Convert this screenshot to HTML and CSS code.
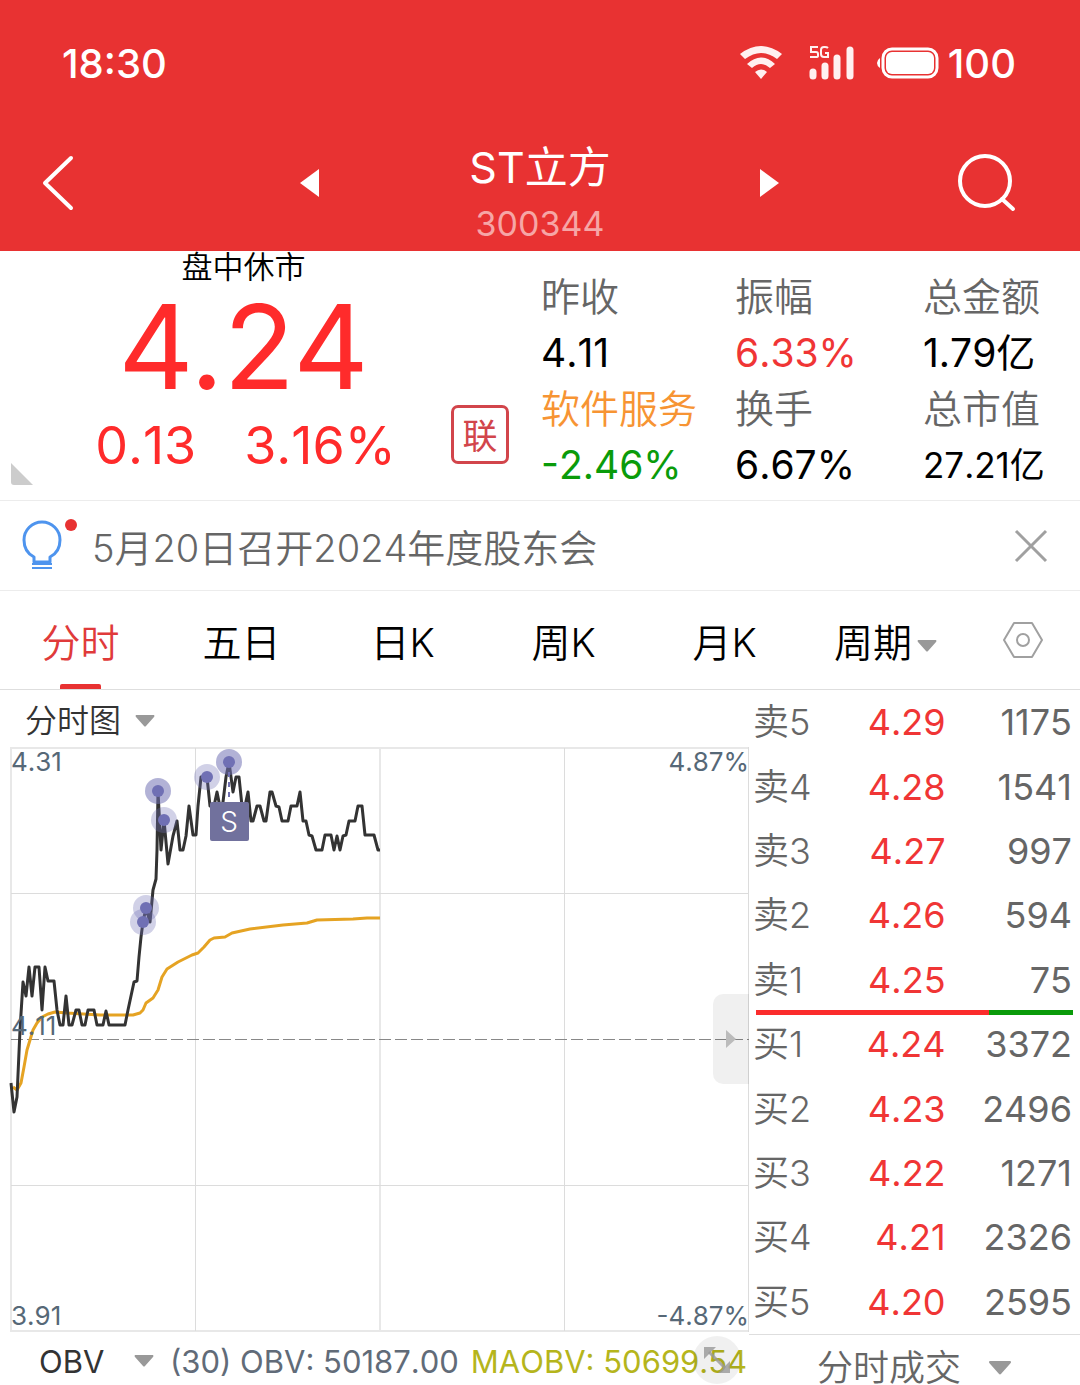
FILE: index.html
```html
<!DOCTYPE html>
<html lang="zh-CN">
<head>
    <meta charset="UTF-8">
    <meta name="viewport" content="width=device-width, initial-scale=1.0">
    <title>ST立方 300344</title>
    <link rel="stylesheet" href="styles.css">
</head>
<body>
    <header class="header">
        <div class="status-bar">
            <span class="clock">18:30</span>
            <div class="status-icons">
                <svg class="wifi" width="46" height="36" viewBox="0 0 46 36">
                    <path d="M2 9Q23 -7 44 9L39 14Q23 2 7 14Z" fill="#fff0f0"/>
                    <path d="M9 19Q23 6 37 19L32 23Q23 15 14 23Z" fill="#fff0f0"/>
                    <path d="M17 27Q23 22 29 27L23 34Z" fill="#fff0f0"/>
                </svg>
                <svg class="signal" width="48" height="36" viewBox="0 0 48 36">
                    <path d="M10 2H3V7H8Q10 7 10 9V11Q10 12 8 12H2M20 3Q19 2 17 2H16Q13 2 13 5V9Q13 12 16 12H20V8H17" fill="none" stroke="#fff0f0" stroke-width="2"/>
                    <path d="M5 27V31M17 21V31M29 13V31M42 5V31" stroke="#fff0f0" stroke-width="7" stroke-linecap="round"/>
                </svg>
                <svg class="battery" width="64" height="34" viewBox="0 0 64 34">
                    <path d="M4 12V22Q1 20 1 17T4 12Z" fill="#fff"/>
                    <rect x="7" y="3" width="54" height="28" rx="9" fill="none" stroke="#fff" stroke-width="3"/>
                    <rect x="10" y="6" width="48" height="22" rx="6" fill="#fff"/>
                </svg>
                <span class="battery-level">100</span>
            </div>
        </div>
        <nav class="nav">
            <button class="icon-button back" aria-label="返回">
                <svg width="34" height="58" viewBox="0 0 34 58"><path d="M31 4L5 29L31 54" fill="none" stroke="#fff" stroke-width="4" stroke-linecap="round" stroke-linejoin="round"/></svg>
            </button>
            <div class="stock-switch">
                <button class="icon-button" aria-label="上一只">
                    <svg width="20" height="28" viewBox="0 0 20 28"><path d="M19 0V28L0 14Z" fill="#fff"/></svg>
                </button>
                <div class="stock-title">
                    <h1 class="stock-name">ST立方</h1>
                    <span class="stock-code">300344</span>
                </div>
                <button class="icon-button" aria-label="下一只">
                    <svg width="20" height="28" viewBox="0 0 20 28"><path d="M0 0V28L19 14Z" fill="#fff"/></svg>
                </button>
            </div>
            <button class="icon-button search" aria-label="搜索">
                <svg width="58" height="58" viewBox="0 0 58 58"><circle cx="27" cy="27" r="25" fill="none" stroke="#fff" stroke-width="4"/><path d="M44 45L55 55" stroke="#fff" stroke-width="4" stroke-linecap="round"/></svg>
            </button>
        </nav>
    </header>

    <section class="quote">
        <div class="quote-main">
            <span class="market-state">盘中休市</span>
            <strong class="price">4.24</strong>
            <div class="change"><span>0.13</span><span>3.16%</span></div>
            <svg class="corner" width="22" height="22" viewBox="0 0 22 22"><path d="M0 0L22 22H3Q0 22 0 19Z" fill="#ccc"/></svg>
        </div>
        <span class="link-badge">联</span>
        <dl class="stats">
            <div class="stat"><dt>昨收</dt><dd>4.11</dd></div>
            <div class="stat"><dt>振幅</dt><dd class="up">6.33%</dd></div>
            <div class="stat"><dt>总金额</dt><dd>1.79亿</dd></div>
            <div class="stat"><dt class="sector">软件服务</dt><dd class="down">-2.46%</dd></div>
            <div class="stat"><dt>换手</dt><dd>6.67%</dd></div>
            <div class="stat"><dt>总市值</dt><dd class="compact">27.21亿</dd></div>
        </dl>
    </section>

    <section class="notice">
        <svg class="bulb" width="58" height="54" viewBox="0 0 58 54">
            <path d="M13 43V38Q3 33 3 21A18 18 0 0 1 39 21Q39 33 29 38V43Z" fill="none" stroke="#4e94ee" stroke-width="3" stroke-linejoin="round"/>
            <path d="M11 45H31M11 49H31" stroke="#4e94ee" stroke-width="2"/>
            <circle cx="50" cy="6" r="6" fill="#e83232"/>
        </svg>
        <a class="notice-text" href="#">5月20日召开2024年度股东会</a>
        <button class="icon-button" aria-label="关闭">
            <svg width="34" height="34" viewBox="0 0 34 34"><path d="M2 2L32 32M32 2L2 32" stroke="#a0a0a0" stroke-width="3"/></svg>
        </button>
    </section>

    <nav class="tabs">
        <button class="tab active">分时</button>
        <button class="tab">五日</button>
        <button class="tab">日K</button>
        <button class="tab">周K</button>
        <button class="tab">月K</button>
        <label class="tab picker">
            <select aria-label="周期"><option>周期</option></select>
            <svg class="caret" width="20" height="12" viewBox="0 0 20 12"><path d="M1 0H19Q20 1 19 2L11 11Q10 12 9 11L1 2Q0 1 1 0Z" fill="#999"/></svg>
        </label>
        <button class="tab" aria-label="设置">
            <svg width="42" height="38" viewBox="0 0 42 38"><path d="M12 2H30L40 19L30 36H12L2 19Z" fill="none" stroke="#a0a0a0" stroke-width="2" stroke-linejoin="round"/><circle cx="21" cy="19" r="6" fill="none" stroke="#a0a0a0" stroke-width="2"/></svg>
        </button>
    </nav>

    <main class="board">
        <section class="chart-panel">
            <label class="chart-type picker">
                <select aria-label="图表类型"><option>分时图</option></select>
                <svg class="caret" width="20" height="12" viewBox="0 0 20 12"><path d="M1 0H19Q20 1 19 2L11 11Q10 12 9 11L1 2Q0 1 1 0Z" fill="#999"/></svg>
            </label>
            <div class="chart-wrap">
                <svg class="chart" viewBox="0 0 749 585">
                    <path d="M11 1H749M11 584H749M11 0V585M380 1V584" stroke="#e8e8e8" stroke-width="2" fill="none"/>
                    <path d="M11 146.500H749M11 438.500H749M195.500 1V584M564.500 1V584M748.500 0V585" stroke="#dcdcdc" stroke-width="1" fill="none"/>
                    <path d="M11 292.500H749" stroke="#888" stroke-dasharray="12 4"/>
                    <!-- average price -->
                    <polyline class="average" points="13,340 17,343 21,336 24,320 27,303 30,293 33,283 37,276 42,270 48,267 55,265 67,266 100,268 133,268 140,266 143,263 146,256 153,251 158,243 162,230 167,222 178,215 192,208 198,206 204,200 210,193 214,191 225,190 232,186 250,182 283,178 307,176 317,173 353,172 367,171 380,171"/>
                    <!-- last price -->
                    <polyline class="last" points="11,336 14,365 17,350 20,283 23,235 26,249 29,220 32,249 35,220 39,220 42,263 45,220 48,234 54,234 57,263 60,278 63,278 66,249 69,278 72,278 76,263 79,263 82,278 85,278 88,263 94,263 97,278 103,278 106,264 109,278 125,278 128,263 134,235 137,234 139,210 141,190 143,175 146,161 150,175 153,143 156,132 157,103 158,44 161,103 164,73 168,117 173,89 177,74 180,103 183,103 186,89 189,59 193,88 196,88 198,59 201,30 207,30 210,59 214,59 217,45 220,60 223,55 226,30 229,15 233,45 236,30 239,30 242,59 245,59 248,45 251,74 253,74 257,59 260,59 264,74 266,74 270,45 272,45 276,59 279,60 282,74 288,74 291,59 297,59 300,45 303,74 306,74 309,88 312,89 316,103 322,103 325,88 331,88 334,103 337,89 340,103 343,89 346,88 349,74 355,74 358,59 362,59 365,88 374,88 378,103 380,103"/>
                    <text class="axis" x="11" y="24">4.31</text>
                    <text class="axis end" x="749" y="24">4.87%</text>
                    <text class="axis" x="11" y="288">4.11</text>
                    <text class="axis" x="11" y="578">3.91</text>
                    <text class="axis end" x="749" y="578">-4.87%</text>
                    <path d="M229 15V60" stroke="#7070b0" stroke-width="2" stroke-dasharray="5 5"/>
                    <g class="halo">
                        <circle class="strong" cx="158" cy="44" r="13"/>
                        <circle cx="164" cy="73" r="13"/>
                        <circle cx="207" cy="30" r="13"/>
                        <circle class="strong" cx="229" cy="15" r="13"/>
                        <circle cx="146" cy="161" r="13"/>
                        <circle cx="143" cy="175" r="13"/>
                    </g>
                    <g class="dot">
                        <circle cx="158" cy="44" r="6"/>
                        <circle cx="164" cy="73" r="6"/>
                        <circle cx="207" cy="30" r="6"/>
                        <circle cx="229" cy="15" r="6"/>
                        <circle cx="146" cy="161" r="6"/>
                        <circle cx="143" cy="175" r="6"/>
                    </g>
                    <rect x="210" y="55" width="39" height="39" rx="2" fill="#71719d"/>
                    <text class="sell-mark" x="229" y="85">S</text>
                </svg>
                <button class="drawer" aria-label="收起盘口">
                    <svg width="10" height="18" viewBox="0 0 10 18"><path d="M0 0L10 9L0 18Z" fill="#bbb"/></svg>
                </button>
            </div>
            <div class="indicator">
                <label class="picker">
                    <select aria-label="指标"><option>OBV</option></select>
                    <svg class="caret" width="20" height="12" viewBox="0 0 20 12"><path d="M1 0H19Q20 1 19 2L11 11Q10 12 9 11L1 2Q0 1 1 0Z" fill="#999"/></svg>
                </label>
                <span class="obv">(30) OBV: 50187.00</span>
                <span class="maobv">MAOBV: 50699.54</span>
                <button class="expand" aria-label="全屏">
                    <svg width="26" height="26" viewBox="0 0 26 26"><path d="M0 0H12L0 12ZM26 26H14L26 14Z" fill="#999" fill-opacity="0.8"/><path d="M5 5L21 21" stroke="#999" stroke-opacity="0.8" stroke-width="3"/></svg>
                </button>
            </div>
        </section>

        <section class="book">
            <table class="orders">
                <tr><th scope="row">卖5</th><td class="order-price">4.29</td><td>1175</td></tr>
                <tr><th scope="row">卖4</th><td class="order-price">4.28</td><td>1541</td></tr>
                <tr><th scope="row">卖3</th><td class="order-price">4.27</td><td>997</td></tr>
                <tr><th scope="row">卖2</th><td class="order-price">4.26</td><td>594</td></tr>
                <tr><th scope="row">卖1</th><td class="order-price">4.25</td><td>75</td></tr>
            </table>
            <div class="ratio"><span class="ratio-buy" style="width: 73.5%"></span></div>
            <table class="orders">
                <tr><th scope="row">买1</th><td class="order-price">4.24</td><td>3372</td></tr>
                <tr><th scope="row">买2</th><td class="order-price">4.23</td><td>2496</td></tr>
                <tr><th scope="row">买3</th><td class="order-price">4.22</td><td>1271</td></tr>
                <tr><th scope="row">买4</th><td class="order-price">4.21</td><td>2326</td></tr>
                <tr><th scope="row">买5</th><td class="order-price">4.20</td><td>2595</td></tr>
            </table>
            <label class="trades picker">
                <select aria-label="成交明细"><option>分时成交</option></select>
                <svg class="caret" width="24" height="14" viewBox="0 0 20 12"><path d="M1 0H19Q20 1 19 2L11 11Q10 12 9 11L1 2Q0 1 1 0Z" fill="#999"/></svg>
            </label>
        </section>
    </main>
</body>
</html>
```

FILE: styles.css
```css
* {
    box-sizing: border-box;
}
body {
    margin: 0;
    background: #fff;
    color: #000;
    font-family: Inter, "Noto Sans CJK SC", sans-serif;
    font-weight: 350;
    font-kerning: none;
}
button, select {
    font: inherit;
    font-kerning: inherit;
    color: inherit;
    background: none;
    border: none;
    padding: 0;
    margin: 0;
    cursor: pointer;
}
select {
    appearance: none;
}
svg {
    display: block;
    flex: none;
}
.icon-button {
    display: flex;
    align-items: center;
}

/* header */
.header {
    background: #e83232;
    color: #fff;
}
.status-bar {
    display: flex;
    justify-content: space-between;
    align-items: center;
    height: 126px;
    padding: 0 64px 0 62px;
    font-size: 40px;
    font-weight: 500;
}
.status-icons {
    display: flex;
    align-items: center;
}
.signal {
    margin-left: 24px;
}
.battery {
    margin-left: 20px;
}
.battery-level {
    margin-left: 8px;
}
.nav {
    display: grid;
    grid-template-columns: 300fr 480fr 300fr;
    height: 125px;
}
.nav .icon-button {
    height: 114px;
}
.back {
    margin-left: 40px;
    justify-self: start;
}
.search {
    margin-right: 64px;
    justify-self: end;
}
.stock-switch {
    display: flex;
    justify-content: space-between;
    align-items: flex-start;
}
.stock-title {
    padding-top: 9px;
    text-align: center;
}
.stock-name {
    margin: 0;
    font-size: 43px;
    line-height: 64px;
    font-weight: 400;
}
.stock-code {
    display: block;
    font-size: 34px;
    line-height: 50px;
    font-weight: 400;
    color: #f6a6a6;
}

/* quote */
.quote {
    display: grid;
    grid-template-columns: 451fr 90fr 539fr;
    height: 250px;
    border-bottom: 1px solid #ececec;
}
.quote-main {
    position: relative;
    display: flex;
    flex-direction: column;
    align-items: center;
    padding-left: 36px;
    color: #ff2b2b;
    font-weight: 400;
}
.market-state {
    font-size: 31px;
    line-height: 32px;
    font-weight: 350;
    color: #000;
}
.price {
    font-size: 117px;
    line-height: 128px;
    font-weight: 400;
    font-kerning: normal;
}
.change {
    display: flex;
    gap: 48px;
    padding-left: 4px;
    font-size: 52px;
    line-height: 70px;
}
.corner {
    position: absolute;
    left: 11px;
    bottom: 15px;
}
.link-badge {
    align-self: end;
    width: 58px;
    height: 59px;
    margin-bottom: 36px;
    border: 3px solid #d2454b;
    border-radius: 7px;
    color: #d2454b;
    font-size: 35px;
    font-weight: 400;
    line-height: 56px;
    text-align: center;
}
.stats {
    display: grid;
    grid-template-columns: 194fr 188fr 157fr;
    align-content: start;
    margin: 0;
    padding-top: 18px;
    font-size: 39px;
    line-height: 56px;
    white-space: nowrap;
}
.stat dt {
    color: #666;
}
.stat dd {
    margin: 0;
    font-weight: 400;
}
.stat .sector {
    color: #f79433;
}
.stat .up {
    color: #f03535;
}
.stat .down {
    color: #0a9b0a;
}
.stat .compact {
    font-size: 35px;
}

/* notice */
.notice {
    display: flex;
    align-items: center;
    height: 90px;
    padding: 0 32px 0 21px;
    border-bottom: 1px solid #ececec;
}
.notice-text {
    flex: 1;
    margin-left: 13px;
    color: #666;
    font-size: 38px;
    text-decoration: none;
}

/* tabs */
.tabs {
    display: grid;
    grid-template-columns: repeat(6, 161fr) 114fr;
    height: 99px;
    border-bottom: 1px solid #dedede;
    font-size: 39px;
}
.tab {
    position: relative;
    display: flex;
    align-items: center;
    justify-content: center;
}
.active {
    color: #e03a3a;
}
.active::after {
    content: "";
    position: absolute;
    left: 60px;
    right: 60px;
    bottom: 0;
    height: 5px;
    border-radius: 2px 2px 0 0;
    background: #e83232;
}
.picker {
    display: flex;
    align-items: center;
}
.tab.picker {
    padding-top: 4px;
}
.tab .caret {
    margin: 8px 0 0 4px;
}

/* chart */
.board {
    display: grid;
    grid-template-columns: 749fr 331fr;
}
.chart-type {
    height: 57px;
    padding: 4px 0 0 25px;
    gap: 13px;
    color: #333;
    font-size: 32px;
}
.chart-wrap {
    position: relative;
}
.chart {
    width: 100%;
}
.axis {
    font-size: 26px;
    font-weight: 400;
    fill: #566877;
}
.end {
    text-anchor: end;
}
.average, .last {
    fill: none;
    stroke: #e5a323;
    stroke-width: 3;
    stroke-linejoin: round;
}
.last {
    stroke: #333;
}
.halo {
    fill: #7070b4;
    fill-opacity: 0.32;
}
.strong {
    fill-opacity: 0.54;
}
.dot {
    fill: #7070b4;
}
.sell-mark {
    fill: #fff;
    font-size: 28px;
    text-anchor: middle;
}
.drawer {
    position: absolute;
    right: 0;
    top: 247px;
    display: flex;
    align-items: center;
    justify-content: center;
    width: 36px;
    height: 90px;
    border-radius: 10px 0 0 10px;
    background: rgba(0, 0, 0, 0.06);
}
.indicator {
    position: relative;
    display: flex;
    align-items: center;
    height: 53px;
    padding: 5px 0 0 39px;
    color: #333;
    font-size: 31px;
    font-weight: 400;
    white-space: nowrap;
}
.indicator .caret {
    margin-left: 29px;
}
.obv {
    margin-left: 16px;
    color: #616b78;
}
.maobv {
    margin-left: 12px;
    color: #b5b51c;
}
.expand {
    position: absolute;
    right: 8px;
    top: 4px;
    display: flex;
    align-items: center;
    justify-content: center;
    width: 48px;
    height: 48px;
    border-radius: 50%;
    background: rgba(0, 0, 0, 0.06);
}

/* order book */
.orders {
    width: 100%;
    height: 322px;
    border-collapse: collapse;
    color: #666;
    font-size: 36px;
    line-height: 1;
}
.orders th, .orders td {
    padding: 0;
    font-weight: 400;
    text-align: right;
}
.orders th {
    width: 26%;
    padding-left: 4px;
    font-weight: 350;
    text-align: left;
}
.orders td {
    padding-right: 8px;
}
.orders .order-price {
    width: 34%;
    padding-right: 2px;
    color: #f03535;
}
.ratio {
    height: 5px;
    margin: -2px 7px -3px;
    background: #0a9b0a;
}
.ratio-buy {
    display: block;
    height: 5px;
    background: #fb2c2c;
}
.trades {
    justify-content: center;
    height: 51px;
    gap: 26px;
    padding-top: 15px;
    border-top: 1px solid #dedede;
    color: #666;
    font-size: 36px;
}
```
